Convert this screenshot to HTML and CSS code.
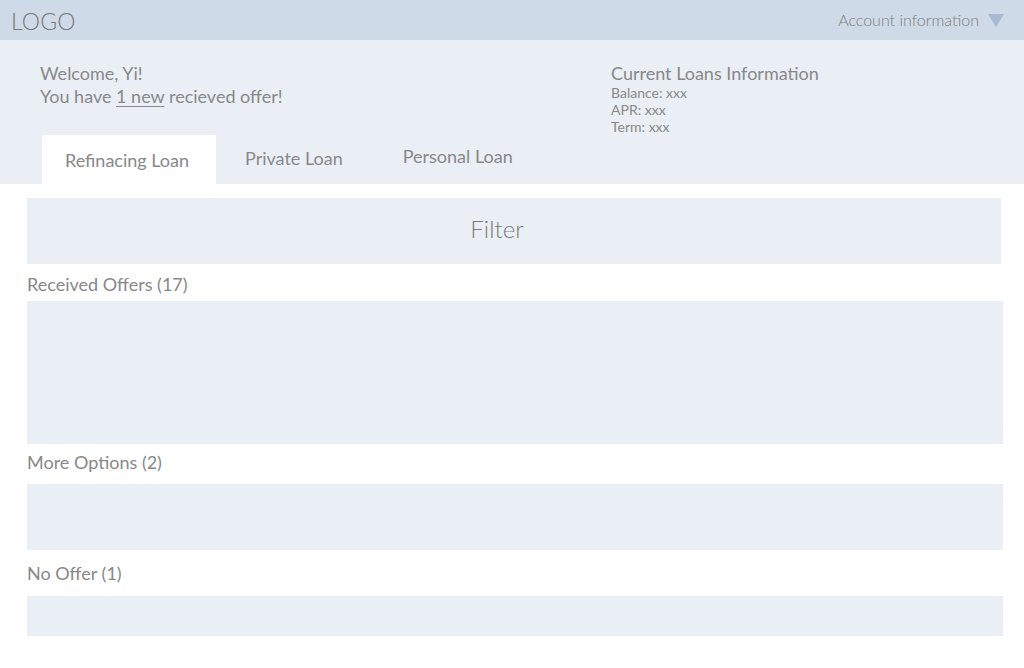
FILE: index.html
```html
<!DOCTYPE html>
<html>
<head>
<meta charset="utf-8">
<link rel="stylesheet" href="styles.css">
</head>
<body>
<header class="topbar">
  <div class="logo">LOGO</div>
  <div class="account">Account information <span class="caret"></span></div>
</header>
<section class="hero">
  <div class="hero-row">
    <div class="welcome">
      <p>Welcome, Yi!</p>
      <p>You have <u>1 new</u> recieved offer!</p>
    </div>
    <div class="loans">
      <p class="loans-title">Current Loans Information</p>
      <p class="loans-line">Balance: xxx</p>
      <p class="loans-line">APR: xxx</p>
      <p class="loans-line">Term: xxx</p>
    </div>
  </div>
  <nav class="tabs">
    <div class="tab active">Refinacing Loan</div>
    <div class="tab tab-private">Private Loan</div>
    <div class="tab tab-personal">Personal Loan</div>
  </nav>
</section>
<main class="content">
  <div class="filter">Filter</div>
  <div class="label">Received Offers (17)</div>
  <div class="box box-received"></div>
  <div class="label label-more">More Options (2)</div>
  <div class="box box-more"></div>
  <div class="label label-none">No Offer (1)</div>
  <div class="box box-none"></div>
</main>
</body>
</html>
```

FILE: styles.css
```css
* { box-sizing: border-box; }
html, body { margin: 0; padding: 0; }
body {
  font-family: Lato, "Open Sans", sans-serif;
  color: #888;
  background: #fff;
  width: 1024px;
  height: 668px;
  overflow: hidden;
}
p { margin: 0; }

.topbar {
  height: 40px;
  background: #cfdae8;
  display: flex;
  align-items: center;
  justify-content: space-between;
  padding: 0 20px 0 11px;
}
.logo {
  font-size: 23px;
  font-weight: 300;
  color: #777;
  letter-spacing: 0.2px;
  margin-top: 2px;
}
.account {
  font-size: 16px;
  font-weight: 300;
  color: #7d7d7d;
  display: flex;
  align-items: center;
  margin-bottom: 2px;
}
.caret {
  display: inline-block;
  width: 0; height: 0;
  border-left: 8px solid transparent;
  border-right: 8px solid transparent;
  border-top: 13px solid #a7b9d3;
  margin-left: 9px;
  margin-top: 3px;
}

.hero {
  background: #eaeff6;
  height: 144px;
  display: flex;
  flex-direction: column;
  justify-content: space-between;
}
.hero-row {
  display: flex;
  padding-top: 22px;
}
.welcome {
  padding-left: 40px;
  width: 611px;
  font-size: 18px;
  line-height: 22px;
}
.welcome p:first-child { line-height: 23px; }
.welcome u { text-underline-offset: 3px; }
.loans-title {
  font-size: 18px;
  line-height: 22px;
}
.loans-line {
  font-size: 14px;
  line-height: 17px;
}
.tabs {
  display: flex;
  height: 50px;
  padding-left: 42px;
}
.tab {
  font-size: 18px;
  display: flex;
  align-items: center;
  padding-bottom: 4px;
}
.tab.active {
  background: #fff;
  width: 174px;
  justify-content: center;
  padding-top: 1px;
  padding-bottom: 0;
  padding-right: 4px;
}
.tab-private {
  margin-left: 29px;
}
.tab-personal {
  margin-left: 60px;
  padding-bottom: 8px;
}

.content {
  padding: 14px 0 0 27px;
  display: flex;
  flex-direction: column;
}
.filter {
  width: 974px;
  height: 66px;
  background: #eaeff6;
  display: flex;
  align-items: center;
  justify-content: center;
  padding-right: 34px;
  padding-bottom: 5px;
  font-size: 24px;
  font-weight: 300;
  color: #7a7a7a;
}
.label {
  font-size: 18px;
  line-height: 20px;
  height: 37px;
  padding-top: 10px;
}
.box {
  width: 976px;
  background: #eaeff6;
}
.box-received { height: 143px; }
.label-more { height: 40px; padding-top: 8px; }
.box-more { height: 66px; }
.label-none { height: 46px; padding-top: 13px; }
.box-none { height: 40px; }
```
